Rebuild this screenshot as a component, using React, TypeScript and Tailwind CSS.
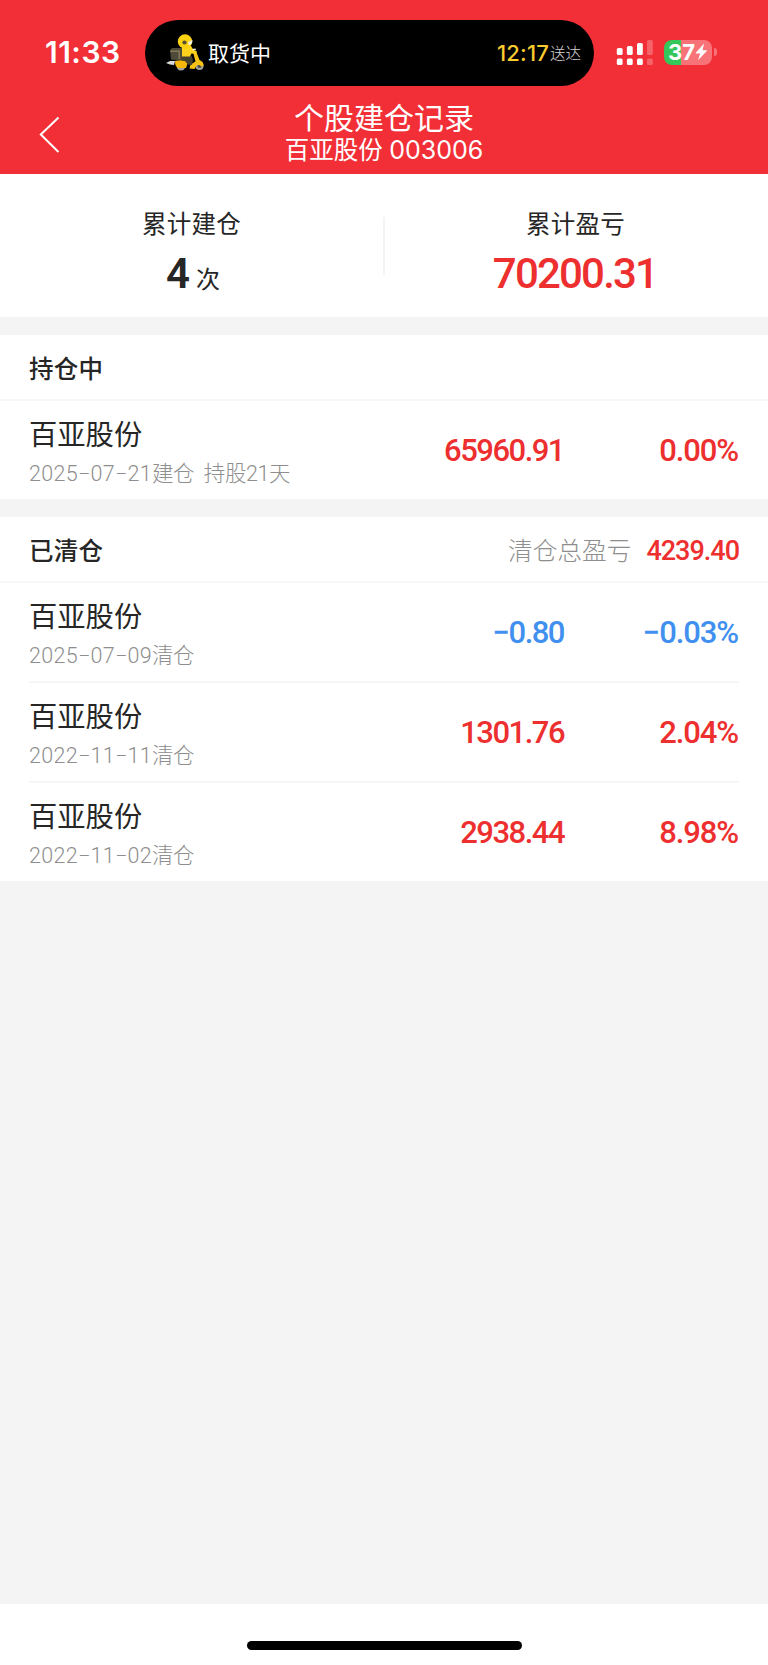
interface Position {
  name: string
  date: string
  note: string
  amount: string
  rate: string
  loss?: boolean
}

const HOLDING: Position[] = [
  { name: '百亚股份', date: '2025−07−21', note: '建仓  持股21天', amount: '65960.91', rate: '0.00%' },
]

const CLOSED: Position[] = [
  { name: '百亚股份', date: '2025−07−09', note: '清仓', amount: '−0.80', rate: '−0.03%', loss: true },
  { name: '百亚股份', date: '2022−11−11', note: '清仓', amount: '1301.76', rate: '2.04%' },
  { name: '百亚股份', date: '2022−11−02', note: '清仓', amount: '2938.44', rate: '8.98%' },
]

function CourierIcon() {
  return (
    <svg width="40" height="38" viewBox="0 0 40 38">
      <path d="M0 29l4-2h5l-1 4-4-.5z" fill="#d9d9d9" />
      <circle cx="15" cy="32.500" r="4" fill="#a3a3a0" />
      <circle cx="33.500" cy="32" r="4" fill="#a3a3a0" />
      <circle cx="15" cy="32.500" r="1.800" fill="#444" />
      <circle cx="33.500" cy="32" r="2" fill="#444" />
      <path d="M9 27c4-1.500 9-1 13 1l-2 6h-8c-2-1-3-3-3-7z" fill="#f5b70a" />
      <path d="M27 18l3-1 3.500 9c2.500 1 4.500 3 4 6l-2.500.5c-1-2-4-2-5 0l-1.500 2.500-5-.5 1-4 5-3z" fill="#f9c314" />
      <path d="M13.500 22h12l1.500 4-1 5-4-.5-3-3.500-5-1z" fill="#45412f" />
      <path d="M16 12h9l2.500 4 3 1v3l-5-.5-1.500 3H16z" fill="#ffd21b" />
      <path d="M4 16l2-2h10v11l-3 1.500-8-1z" fill="#4d4a3a" />
      <path d="M4.500 16.500h9.500v1.500H4.500zM12.500 18H14v7h-1.500z" fill="#857a55" />
      <circle cx="19" cy="7.500" r="7.200" fill="#fbd20f" />
      <path d="M22 8l4.500-2c0 3-1 4.500-3.500 5.500z" fill="#f3efe0" />
      <ellipse cx="18.500" cy="8.500" rx="2.200" ry="2" fill="#5b5230" />
      <path d="M26 15l3.500-.5.5 1.500-3 .5z" fill="#f2eee0" />
    </svg>
  )
}

function SignalIcon() {
  return (
    <svg width="38" height="27" viewBox="0 0 38 27" fill="#fff">
      <rect x="0.800" y="9" width="5.800" height="7" rx="1.500" />
      <rect x="10.900" y="7" width="5.800" height="9" rx="1.500" />
      <rect x="21" y="4" width="5.800" height="12" rx="1.500" />
      <rect x="31" y="1" width="5.800" height="15" rx="1.500" opacity="0.25" />
      <rect x="0.800" y="19.500" width="5.800" height="6.500" rx="1.500" />
      <rect x="10.900" y="19.500" width="5.800" height="6.500" rx="1.500" />
      <rect x="21" y="19.500" width="5.800" height="6.500" rx="1.500" />
      <rect x="31" y="19.500" width="5.800" height="6.500" rx="1.500" opacity="0.25" />
    </svg>
  )
}

function Battery() {
  return (
    <div className="flex items-center">
      <div className="flex h-[25px] w-[48px] items-center overflow-hidden rounded-[8px] bg-[linear-gradient(to_right,#34c759_17px,#f77378_17px)] pl-[4px]">
        <span className="font-['Inter'] text-[22px] leading-none font-bold">37</span>
        <svg width="13" height="18" viewBox="0 0 13 18" fill="#fff">
          <path d="M9 .5L.8 9.700c-.3.4-.1.800.4.800h4L3 17.300 11.800 8c.3-.4.1-.8-.4-.8H7.600z" />
        </svg>
      </div>
      <div className="ml-[2px] h-[8px] w-[3px] rounded-r-full bg-[#f77378]" />
    </div>
  )
}

function StatusBar() {
  return (
    <div className="flex h-[86px] items-end">
      <span className="ml-[45px] flex h-[67px] w-[100px] items-center pb-px font-['Inter'] text-[30px] leading-none font-semibold tracking-[0.5px]">
        11:33
      </span>
      <div className="flex h-[66px] w-[449px] items-center rounded-full bg-black pr-[13px] pl-[21px]">
        <CourierIcon />
        <span className="ml-[2px] pb-[2px] text-[21px] leading-none">取货中</span>
        <span className="ml-auto font-['Inter'] text-[22px] leading-none font-medium tracking-[0.2px] text-[#f9cb2e]">
          12:17
        </span>
        <span className="ml-px text-[15.500px] leading-none font-light text-[#d6d6d6]">送达</span>
      </div>
      <div className="ml-[22px] flex h-[68px] items-center gap-[10px]">
        <SignalIcon />
        <Battery />
      </div>
    </div>
  )
}

function NavBar() {
  return (
    <div className="relative flex h-[88px] flex-col items-center pt-[14px]">
      <button aria-label="返回" className="absolute top-[29px] left-[38px]">
        <svg width="24" height="38" viewBox="0 0 24 38" fill="none" stroke="#fff" strokeWidth="2">
          <path d="M20.500 2.500L2.800 19.500 20.500 37" />
        </svg>
      </button>
      <h1 className="text-[30px] leading-[33px]">个股建仓记录</h1>
      <p className="pt-px text-[24.500px] leading-[30px]">
        百亚股份 <span className="ml-px font-['Inter'] text-[25px]">003006</span>
      </p>
    </div>
  )
}

function Summary() {
  return (
    <section className="flex h-[143px] items-start bg-white pt-[35px] text-center">
      <div className="flex-1">
        <p className="text-[24.500px] leading-[28px] tracking-[0.2px]">累计建仓</p>
        <p className="mt-[14px] flex h-[46px] items-baseline justify-center gap-[6px] pl-[3px] leading-[46px]">
          <span className="font-['Roboto'] text-[42px] font-semibold">4</span>
          <span className="text-[24px]">次</span>
        </p>
      </div>
      <div className="mt-[8px] h-[58px] w-[2px] bg-[#f3f3f3]" />
      <div className="flex-1">
        <p className="pr-[2px] text-[24.500px] leading-[28px] tracking-[0.2px]">累计盈亏</p>
        <p className="mt-[14px] pr-[3px] font-['Roboto'] text-[42px] leading-[46px] font-medium tracking-[-1.8px] text-[#ed2f2f]">
          70200.31
        </p>
      </div>
    </section>
  )
}

function PositionRow({ item }: { item: Position }) {
  const color = item.loss ? 'text-[#4190f0]' : 'text-[#ed2f2f]'
  return (
    <li className="mx-[29px] flex h-[100px] items-start border-b-2 border-[#f6f6f6] last:border-b-0">
      <div className="flex-1 pt-[14px]">
        <p className="text-[28.300px] leading-[36px]">{item.name}</p>
        <p className="mt-[6px] font-['Roboto','Noto_Sans_CJK_SC',sans-serif] text-[21.500px] leading-[34px] font-light whitespace-pre text-[#8e8e8e]">
          <span className="tracking-[0.3px]">{item.date}</span>
          <span className="tracking-[-0.4px]">{item.note}</span>
        </p>
      </div>
      <span className={`mt-[34px] w-[180px] text-right font-['Roboto'] text-[31px] leading-[32px] font-medium tracking-[-1.5px] ${color}`}>
        {item.amount}
      </span>
      <span className={`mt-[34px] w-[175px] pr-px text-right font-['Roboto'] text-[31px] leading-[32px] font-medium tracking-[-1.1px] ${color}`}>
        {item.rate}
      </span>
    </li>
  )
}

function SectionHeader({ title, total }: { title: string; total?: string }) {
  return (
    <div className="flex h-[66px] items-center border-b-2 border-[#f8f8f8] px-[29px] pt-[2px]">
      <h2 className="text-[24.500px] leading-[28px] font-medium tracking-[0.2px]">{title}</h2>
      {total && (
        <p className="ml-auto flex items-center leading-[28px]">
          <span className="-mt-[2px] text-[24.700px] font-light text-[#8e8e8e]">清仓总盈亏</span>
          <span className="ml-[15px] pt-[2px] font-['Roboto'] text-[27px] font-medium tracking-[-1px] text-[#ed2f2f]">{total}</span>
        </p>
      )}
    </div>
  )
}

export default function App() {
  return (
    <div className="flex h-[1665px] w-[768px] flex-col bg-[#f4f4f4] font-['Noto_Sans_CJK_SC',sans-serif] text-[#262626]">
      <header className="h-[174px] bg-[#f22f37] text-white">
        <StatusBar />
        <NavBar />
      </header>
      <Summary />
      <section className="mt-[18px] h-[164px] bg-white">
        <SectionHeader title="持仓中" />
        <ul>
          {HOLDING.map((item) => (
            <PositionRow key={item.date} item={item} />
          ))}
        </ul>
      </section>
      <section className="mt-[18px] h-[364px] bg-white">
        <SectionHeader title="已清仓" total="4239.40" />
        <ul>
          {CLOSED.map((item) => (
            <PositionRow key={item.date} item={item} />
          ))}
        </ul>
      </section>
      <footer className="mt-auto h-[61px] bg-white pt-[37px]">
        <div className="mx-auto h-[9px] w-[275px] rounded-full bg-black" />
      </footer>
    </div>
  )
}
